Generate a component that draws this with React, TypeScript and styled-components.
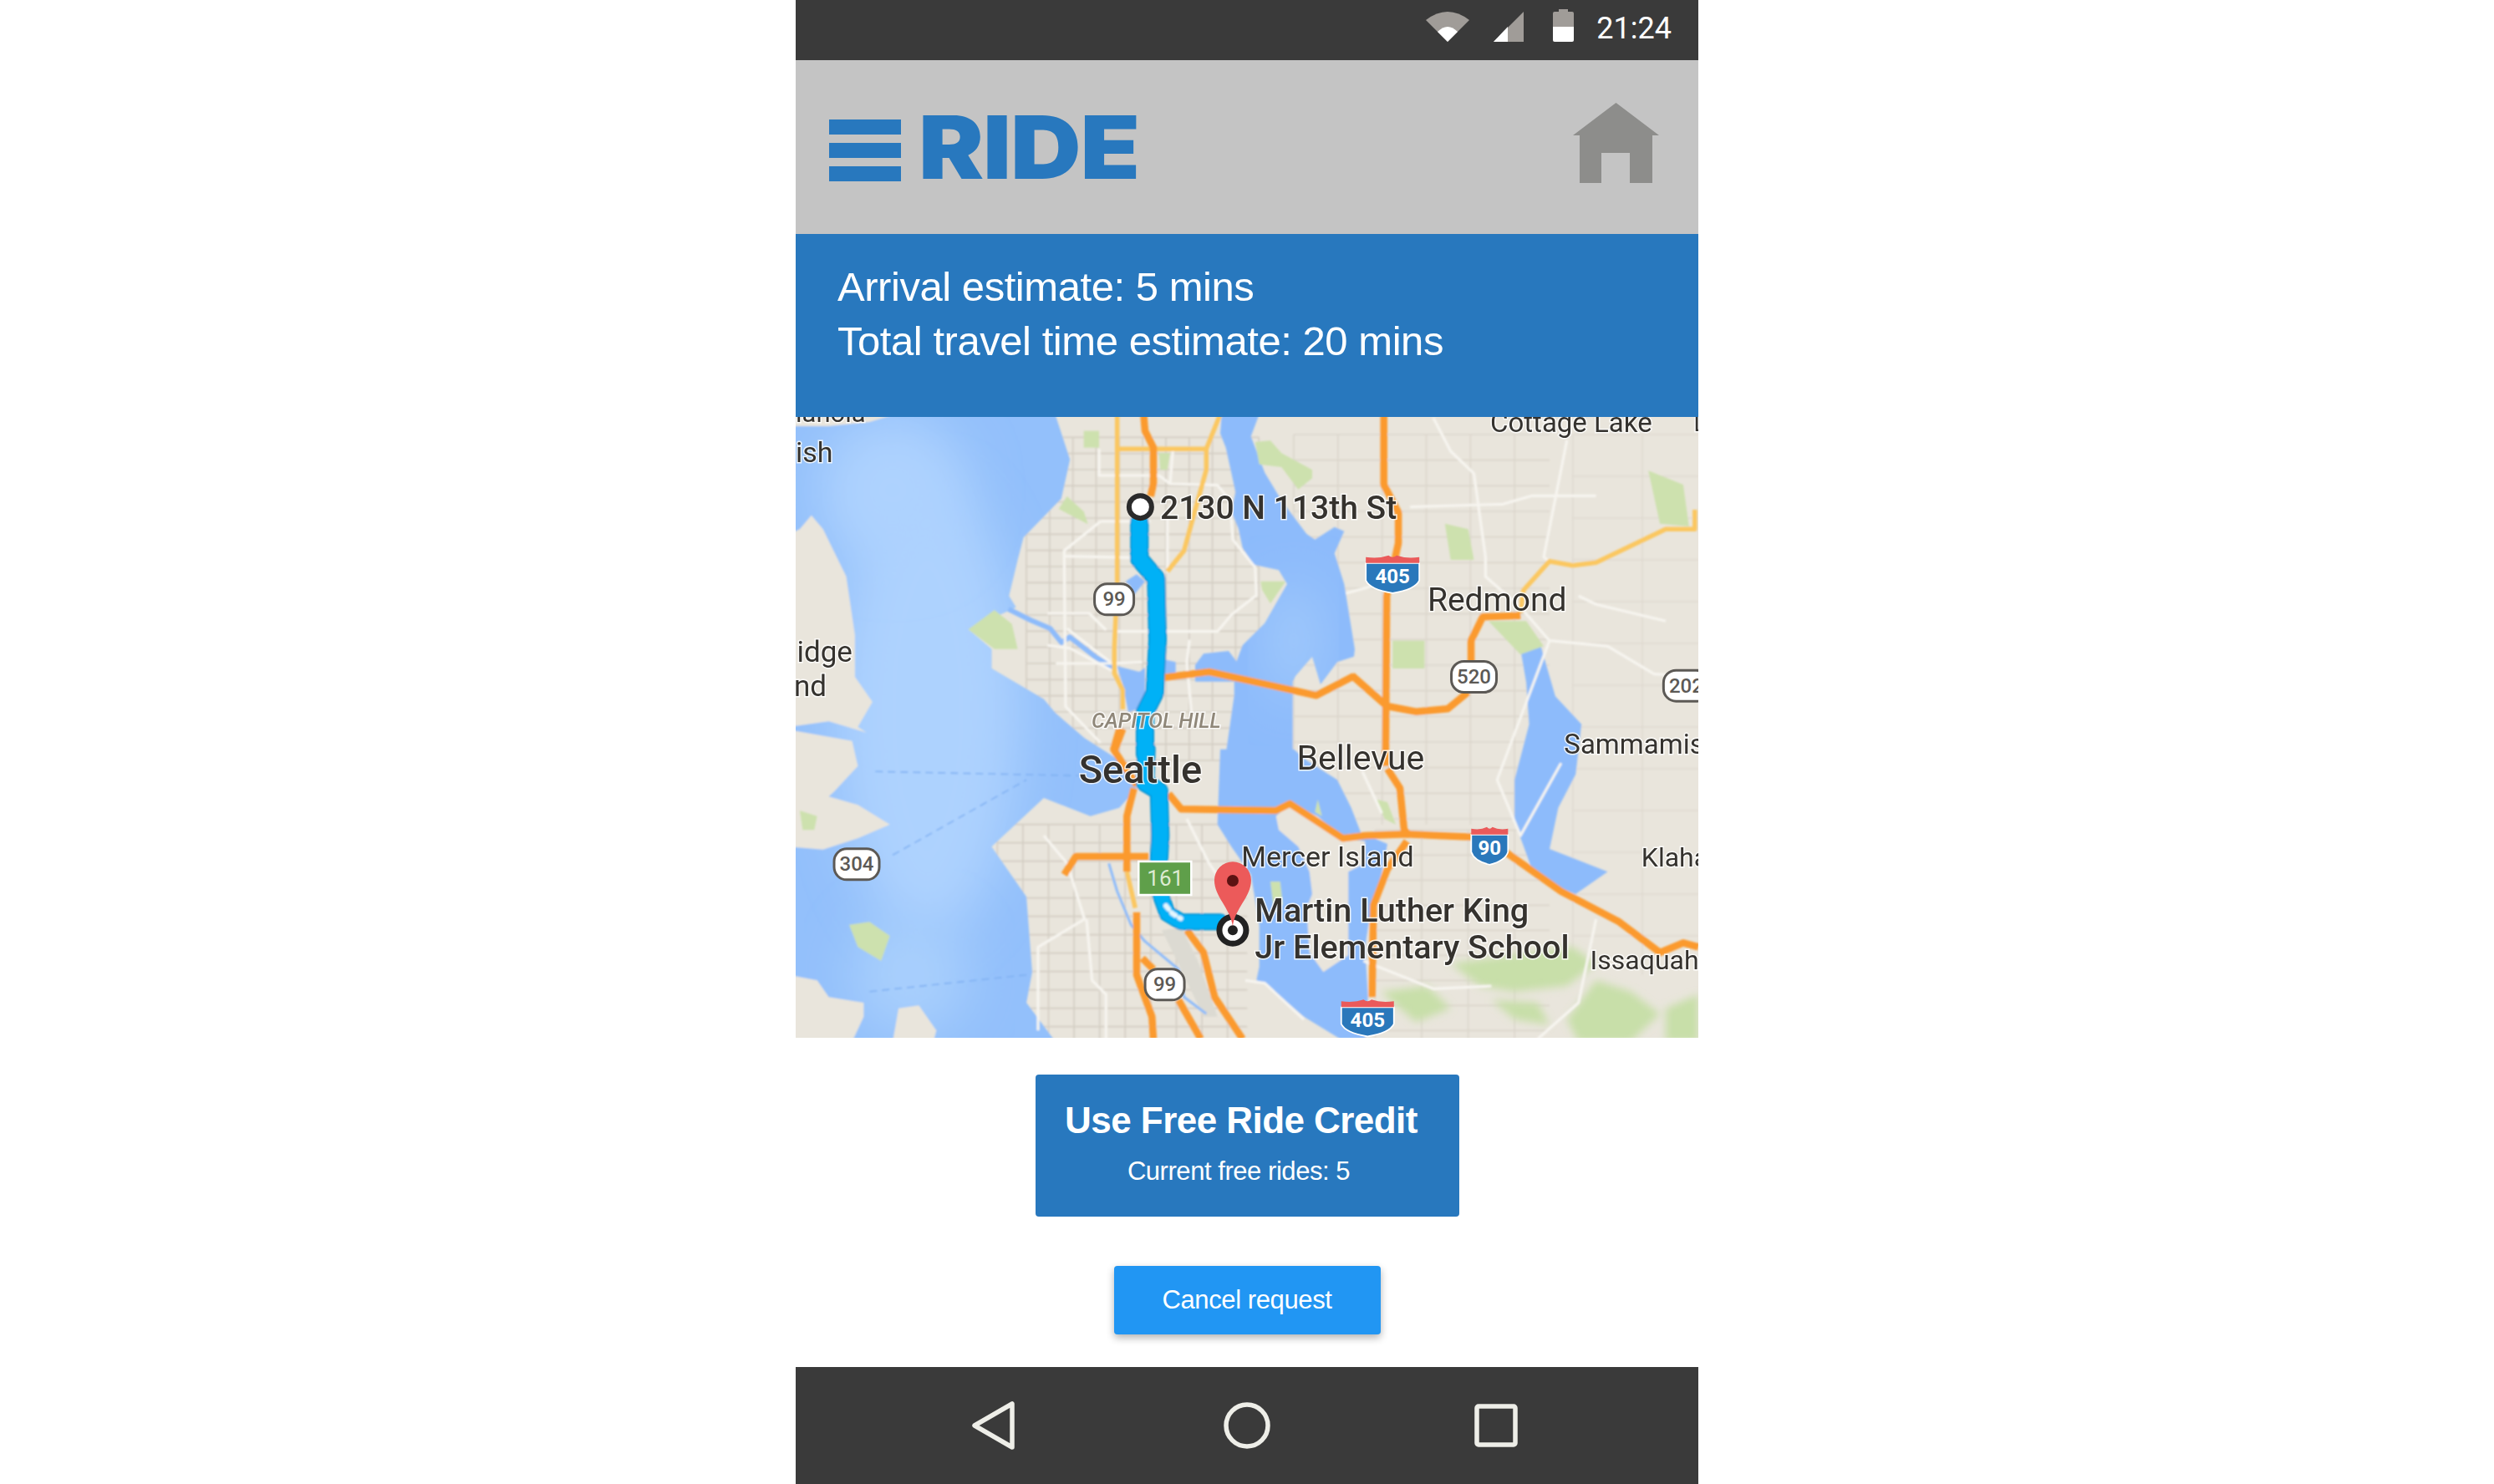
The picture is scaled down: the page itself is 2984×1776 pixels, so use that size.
import React from 'react';
import styled, { createGlobalStyle } from 'styled-components';

const GlobalStyle = createGlobalStyle`
  html, body {
    margin: 0;
    padding: 0;
    background: #ffffff;
  }
`;

const BLUE = '#2878be';
const ORANGE = '#fb9a2e';
const YELLOW = '#fbc760';
const LAND = '#e9e5dc';
const SOUND = '#93c0fb';
const LAKE = '#8dbbfb';
const GREEN = '#cde1ae';

// map points were read off the reference, so convert them to map pixels here
const X = (u: number) => (u - 3) * 0.6954;
const Y = (v: number) => (v + 3) / 3;
const pts = (s: string) =>
  s
    .trim()
    .split(/\s+/)
    .map((p) => {
      const [u, v] = p.split(',').map(Number);
      return `${X(u).toFixed(1)},${Y(v).toFixed(1)}`;
    })
    .join(' ');

// same thing for points read from a 3x crop at page position ox, oy
const at = (ox: number, oy: number) => (s: string) =>
  s
    .trim()
    .split(/\s+/)
    .map((p) => {
      const [a, b] = p.split(',').map(Number);
      return `${(a / 3 + ox - 952).toFixed(1)},${(b / 3 + oy - 499).toFixed(1)}`;
    })
    .join(' ');
const north = at(1200, 499);
const south = at(1300, 900);

const sound = pts(
  '-10,-10 450,-10 475,150 460,290 395,430 385,510 370,640 382,680 300,760 340,830 340,900 430,1010 450,1060 500,1150 560,1230 590,1330 560,1400 510,1430 430,1365 340,1540 400,1720 410,1990 400,2100 450,2240 -10,2240',
);

const mainLake = north(
  '785,-10 920,-10 890,70 940,200 1000,300 1090,420 1120,440 1190,395 1225,410 1190,490 1225,600 1263,834 1260,860 1200,880 1140,960 1110,860 1050,930 1040,950 1040,1210 800,1210 830,1000 830,900 860,820 940,740 1020,600 990,550 900,530 860,470 845,400 820,340 835,270 800,110 780,60',
);

const lakes = [
  mainLake,
  north('690,890 720,850 810,840 840,880 830,950 690,950'),
  north('575,870 620,880 620,930 575,930'),
  north('410,895 490,915 510,900 510,990 480,1050 450,1060 430,960'),
  north('440,590 480,565 510,590 470,640 440,640 460,610'),
  south('480,-10 470,260 520,340 590,440 620,620 620,770 610,820 640,830 780,950 910,1030 1000,1030 1010,880 1000,700 1015,600 1060,430 1080,330 985,290 950,200 900,100 790,30 744,-10'),
  pts('1250,830 1285,820 1310,1000 1355,1100 1345,1280 1315,1400 1300,1550 1290,1540 1400,1630 1345,1710 1275,1650 1240,1450 1240,1300 1265,1100 1260,950'),
];

const lands = [
  pts('-10,-10 170,-10 130,15 60,30 -10,30'),
  pts('-10,420 10,400 30,350 50,400 90,570 105,780 105,930 135,1020 110,1110 125,1130 60,1090 -10,1110'),
  pts('-10,1120 100,1160 110,1250 70,1340 60,1360 110,1390 165,1460 110,1510 50,1550 -10,1540'),
  pts('-10,2000 40,2020 60,2080 120,2100 120,2150 100,2240 -10,2240'),
  pts('180,2120 215,2110 245,2200 240,2240 170,2240'),
  south('680,230 730,185 830,230 920,310 1000,320 1000,400 940,430 940,730 850,790 800,720 790,560 810,510 800,430 760,340 690,280'),
];

const greens = [
  pts('95,1820 130,1810 165,1860 150,1950 110,1900'),
  pts('300,760 345,690 375,740 385,830 345,830'),
  north('925,590 1015,590 960,670 930,620'),
  north('200,330 230,285 290,340 305,385'),
  north('290,50 345,50 345,110 290,110'),
  north('560,130 600,130 590,190 565,190'),
  north('905,90 960,85 1000,130 1110,190 1110,220 1060,260 1000,180 920,170'),
  pts('1030,800 1085,800 1085,900 1030,900'),
  pts('1195,730 1260,730 1290,820 1250,850'),
  pts('1470,190 1530,240 1540,390 1490,380'),
  pts('1120,380 1160,400 1170,510 1130,510'),
  pts('10,1410 40,1430 35,1480 15,1480'),
  south('660,465 695,465 705,550 670,550'),
  south('830,170 845,230 820,215'),
  south('1040,170 1080,180 1110,260 1070,240'),
];

// the hills south east of the lakes are a mottled green, not one flat patch
const hills = [
  pts('1130,1960 1230,1930 1340,1900 1380,1960 1330,2040 1240,2060 1180,2040'),
  pts('1380,2020 1440,2060 1490,2140 1440,2240 1350,2240 1330,2160'),
  pts('1500,2120 1556,2070 1556,2240 1500,2240'),
  pts('1200,2090 1280,2100 1300,2180 1240,2160'),
  pts('1010,2060 1090,2040 1130,2120 1070,2170'),
];

const whites = [
  north('345,115 345,210 560,210 600,240 770,245 815,300 825,440 905,540 910,640 820,710 770,770 400,770'),
  north('350,375 220,480 225,1040 350,1170'),
  north('160,705 310,705 370,765'),
  north('160,820 240,830 390,910'),
  north('190,885 390,885 500,880'),
  north('225,500 470,505'),
  north('610,120 600,240'),
  north('590,360 590,560'),
  north('350,375 530,375'),
  north('670,800 660,880 680,1100'),
  north('230,760 385,880'),
  south('360,240 440,400 530,530'),
  south('570,820 640,830 780,960'),
  south('990,70 1060,220'),
  south('0,600 20,820 70,870 70,1030'),
  pts('1330,80 1290,500 1300,515'),
  pts('1100,0 1130,120 1170,200 1190,500 1190,570 1250,680 1300,800 1400,820 1480,920 1556,930'),
  pts('1060,320 1220,310 1270,280 1380,280'),
  pts('1350,640 1380,670 1500,730'),
  pts('950,630 1020,590'),
  pts('1300,800 1210,1300 1250,1500 1320,1240'),
  pts('430,1500 470,1600 500,1800 420,1900 420,2200'),
  pts('980,1950 1100,2050 1200,2040'),
  pts('1380,1800 1350,2100 1280,2230'),
];

const yellows = [
  north('410,-10 410,600 400,830 400,920 430,980 430,1050'),
  north('410,115 730,115'),
  north('780,-10 730,115 730,190 680,370 650,480 590,555'),
  south('145,430 175,560'),
  pts('1550,330 1550,400 1500,400 1380,520 1340,530 1300,515 1255,620 1250,700'),
];

const oranges = [
  north('505,-10 510,50 540,110 540,240 530,285'),
  north('580,935 740,915 1125,1000 1260,930'),
  pts('960,925 1020,1035 1070,1055 1125,1045 1160,985'),
  pts('1165,880 1165,800 1185,715 1250,710'),
  pts('1015,-10 1015,240 1040,340 1040,450 1020,640 1018,1250'),
  south('1080,60 1125,130 1140,280 1160,300'),
  north('430,1120 400,1200'),
  pts('560,1120 550,1190 590,1320'),
  south('295,150 340,205 680,210 730,185 920,310 1000,300 1150,295 1260,300 1390,305'),
  pts('1225,1560 1320,1700 1420,1810 1490,1920 1530,1885 1556,1900'),
  south('170,130 145,230 145,430'),
  south('180,575 180,800 235,950 240,1030'),
  south('200,740 240,780'),
  south('330,890 410,1030'),
  south('360,640 420,720 460,880 560,1030'),
  pts('465,1640 485,1575 610,1575'),
  south('1150,320 1080,420 1030,550 1025,880'),
];

const routeNorth = north('490,380 490,510 550,580 555,800 545,990 510,1060 510,1210');
const routeMiddle = south('215,-10 210,110 260,140 265,300 260,390');
const routeSouth = south('265,510 290,580 340,610 480,610');

const grids = [
  { u0: 400, v0: 70, u1: 800, v1: 1230, du: 40, dv: 58, shade: '#d3cdc3' },
  { u0: 860, v0: 60, u1: 1300, v1: 1460, du: 76, dv: 92, shade: '#dbd6cc' },
  { u0: 350, v0: 1460, u1: 780, v1: 2240, du: 44, dv: 66, shade: '#d3cdc3' },
  { u0: 1000, v0: 1480, u1: 1300, v1: 2240, du: 80, dv: 90, shade: '#dbd6cc' },
  { u0: 1340, v0: 60, u1: 1556, v1: 2000, du: 120, dv: 150, shade: '#dfdad1' },
  { u0: 830, v0: 1500, u1: 950, v1: 1900, du: 50, dv: 80, shade: '#dbd6cc' },
];

const labels = [
  { text: 'ianola', u: 3, v: 16, size: 31, weight: 400 },
  { text: 'ish', u: 3, v: 160, size: 34, weight: 400 },
  { text: 'Cottage Lake', u: 1198, v: 52, size: 33, weight: 400 },
  { text: 'L', u: 1548, v: 48, size: 28, weight: 400 },
  { text: 'Redmond', u: 1090, v: 692, size: 39, weight: 400 },
  { text: 'Bellevue', u: 865, v: 1262, size: 41, weight: 400 },
  { text: 'Seattle', u: 490, v: 1310, size: 47, weight: 500 },
  { text: 'idge', u: 5, v: 875, size: 35, weight: 400 },
  { text: 'nd', u: 0, v: 998, size: 35, weight: 400 },
  { text: 'Sammamish', u: 1325, v: 1205, size: 33, weight: 400 },
  { text: 'Mercer Island', u: 770, v: 1610, size: 34, weight: 400 },
  { text: 'Klahanie', u: 1458, v: 1610, size: 32, weight: 400 },
  { text: 'Issaquah', u: 1370, v: 1980, size: 32, weight: 400 },
  { text: '2130 N 113th St', u: 630, v: 362, size: 39, weight: 500 },
  { text: 'Martin Luther King', u: 793, v: 1810, size: 39.5, weight: 500 },
  { text: 'Jr Elementary School', u: 793, v: 1942, size: 39.5, weight: 500 },
];

const stateShields = [
  { text: '99', u: 551, v: 652, w: 47 },
  { text: '520', u: 1170, v: 930, w: 54 },
  { text: '202', u: 1535, v: 962, w: 54 },
  { text: '304', u: 108, v: 1603, w: 54 },
  { text: '99', u: 638, v: 2035, w: 47 },
];

const interstates = [
  { text: '405', u: 1030, v: 562, w: 64, h: 45 },
  { text: '90', u: 1197, v: 1537, w: 44, h: 45 },
  { text: '405', u: 987, v: 2155, w: 63, h: 44 },
];

const Interstate = ({ text, x, y, w, h }: { text: string; x: number; y: number; w: number; h: number }) => {
  const s = w / 2;
  const top = -h / 2;
  const band = top + 9;
  const bottom = h / 2;
  return (
    <g transform={`translate(${x} ${y})`}>
      <path
        d={`M${-s} ${band} L${s} ${band} L${s} ${bottom - h * 0.34} Q${s * 0.85} ${bottom - h * 0.1} 0 ${bottom} Q${-s * 0.85} ${bottom - h * 0.1} ${-s} ${bottom - h * 0.34} Z`}
        fill="#2a78bb"
        stroke="#ffffff"
        strokeWidth="1.8"
      />
      <path
        d={`M${-s} ${band} L${-s} ${top + 2} Q${-s * 0.5} ${top + 4} ${-s * 0.15} ${top} Q0 ${top + 4} ${s * 0.15} ${top} Q${s * 0.5} ${top + 4} ${s} ${top + 2} L${s} ${band} Z`}
        fill="#ea5a5a"
      />
      <text x="0" y={band + 24} textAnchor="middle" fontFamily="Roboto, sans-serif" fontWeight="700" fontSize="24" fill="#ffffff">
        {text}
      </text>
    </g>
  );
};

const MapDrawing = () => (
  <MapSvg viewBox="0 0 1080 743" preserveAspectRatio="none">
    <defs>
      <filter id="soft" x="-2%" y="-2%" width="104%" height="104%">
        <feGaussianBlur stdDeviation="0.9" />
      </filter>
      <filter id="softer" x="-40%" y="-40%" width="180%" height="180%">
        <feGaussianBlur stdDeviation="30" />
      </filter>
      <filter id="textSoft">
        <feGaussianBlur stdDeviation="0.45" />
      </filter>
      <filter id="hillSoft" x="-10%" y="-10%" width="120%" height="120%">
        <feGaussianBlur stdDeviation="5" />
      </filter>
      <clipPath id="soundClip">
        <polygon points={sound} />
      </clipPath>
      <clipPath id="lakeClip">
        <polygon points={mainLake} />
      </clipPath>
    </defs>
    <rect x="0" y="0" width="1080" height="743" fill={LAND} />
    <g filter="url(#soft)">
      <g strokeWidth="1.6">
        {grids.map((g, i) => {
          const lines = [];
          for (let u = g.u0; u <= g.u1; u += g.du) {
            lines.push(<line key={`u${u}`} x1={X(u)} y1={Y(g.v0)} x2={X(u)} y2={Y(g.v1)} />);
          }
          for (let v = g.v0; v <= g.v1; v += g.dv) {
            lines.push(<line key={`v${v}`} x1={X(g.u0)} y1={Y(v)} x2={X(g.u1)} y2={Y(v)} />);
          }
          return (
            <g key={i} stroke={g.shade}>
              {lines}
            </g>
          );
        })}
      </g>
      <polygon points={sound} fill={SOUND} />
      <g clipPath="url(#soundClip)">
        <ellipse cx={X(230)} cy={Y(1050)} rx="110" ry="270" fill="#add2fe" filter="url(#softer)" />
        <ellipse cx={X(170)} cy={Y(260)} rx="90" ry="90" fill="#add2fe" filter="url(#softer)" />
        <ellipse cx={X(200)} cy={Y(2000)} rx="70" ry="70" fill="#a8cffd" filter="url(#softer)" />
      </g>
      {lakes.map((p, i) => (
        <polygon key={i} points={p} fill={LAKE} />
      ))}
      <g clipPath="url(#lakeClip)">
        <ellipse cx={X(860)} cy={Y(800)} rx="30" ry="70" fill="#a2cafc" filter="url(#softer)" />
      </g>
      {lands.map((p, i) => (
        <polygon key={i} points={p} fill={LAND} />
      ))}
      <polygon points={south('270,640 340,630 400,750 470,950 420,950 320,740')} fill="#dcdad2" />
      <g filter="url(#hillSoft)">
        {hills.map((p, i) => (
          <polygon key={i} points={p} fill="#c8dfa9" />
        ))}
      </g>
      {greens.map((p, i) => (
        <polygon key={i} points={p} fill={GREEN} />
      ))}
      <g fill="none" stroke={LAKE} strokeLinejoin="round">
        <polyline points={north('20,690 100,730 170,760 210,810 240,790 330,860 395,900')} strokeWidth="6" />
        <polyline points={south('80,400 110,500 160,620 210,680 330,780 350,880 430,940')} strokeWidth="3" />
      </g>
      <g fill="none" stroke="#7fb0f2" strokeWidth="1.6" strokeDasharray="9 6">
        <polyline points={pts('140,1270 490,1285')} />
        <polyline points={pts('170,1570 400,1300')} />
        <polyline points={pts('130,2060 400,2000')} />
      </g>
      <g fill="none" stroke="#f7f5f0" strokeWidth="3.2" strokeLinejoin="round">
        {whites.map((p, i) => (
          <polyline key={i} points={p} />
        ))}
      </g>
      <g fill="none" stroke={YELLOW} strokeWidth="5.5" strokeLinejoin="round">
        {yellows.map((p, i) => (
          <polyline key={i} points={p} />
        ))}
      </g>
      <g fill="none" stroke={ORANGE} strokeWidth="8.5" strokeLinejoin="round">
        {oranges.map((p, i) => (
          <polyline key={i} points={p} />
        ))}
      </g>
      <g fill="none" strokeLinejoin="round" strokeLinecap="round">
        <polyline points={routeNorth} stroke="#078ccf" strokeWidth="22" />
        <polyline points={routeMiddle} stroke="#078ccf" strokeWidth="22" />
        <polyline points={routeNorth} stroke="#01b1f6" strokeWidth="19" />
        <polyline points={routeMiddle} stroke="#01b1f6" strokeWidth="19" />
        <polyline points={routeSouth} stroke="#078ccf" strokeWidth="20" />
        <polyline points={routeSouth} stroke="#01b1f6" strokeWidth="17" />
        <polyline points={south('285,552 308,580 338,598')} stroke="#e4f6fd" strokeWidth="6" strokeDasharray="5 6" />
      </g>
    </g>
    {stateShields.map((s) => (
      <g key={s.text + s.u} transform={`translate(${X(s.u)} ${Y(s.v)})`}>
        <rect x={-s.w / 2} y="-18.5" width={s.w} height="37" rx="15" fill="#ffffff" stroke="#5c5955" strokeWidth="3" />
        <text y="8" textAnchor="middle" fontFamily="Roboto, sans-serif" fontWeight="500" fontSize="24" fill="#5c5955">
          {s.text}
        </text>
      </g>
    ))}
    {interstates.map((s) => (
      <Interstate key={s.text + s.u} text={s.text} x={X(s.u)} y={Y(s.v)} w={s.w} h={s.h} />
    ))}
    <g transform={`translate(${X(593)} ${Y(1593)})`}>
      <rect x="0" y="0" width="63" height="40" fill="#5f9f4a" stroke="#ffffff" strokeWidth="2.5" />
      <text x="32" y="29" textAnchor="middle" fontFamily="Roboto, sans-serif" fontSize="26" fill="#dcebd2">
        161
      </text>
    </g>
    <g filter="url(#textSoft)">
      <MapLabel x={X(512)} y={Y(1112)} fontSize="25" fontStyle="italic" fontWeight="500" $tint="#8f8779">
        CAPITOL HILL
      </MapLabel>
      {labels.map((l) => (
        <MapLabel key={l.text} x={X(l.u)} y={Y(l.v)} fontSize={l.size} fontWeight={l.weight} $tint="#35332f">
          {l.text}
        </MapLabel>
      ))}
    </g>
    <circle cx={X(596)} cy={Y(320)} r="13.5" fill="#ffffff" stroke="#2a2a2a" strokeWidth="6" />
    <circle cx={X(755)} cy={Y(1840)} r="16" fill="#ffffff" stroke="#222222" strokeWidth="7" />
    <circle cx={X(755)} cy={Y(1840)} r="6" fill="#222222" />
    <path
      d={`M${X(755)} ${Y(1825)} C${X(755) - 3} ${Y(1760)} ${X(755) - 22} ${Y(1720)} ${X(755) - 22} ${Y(1660)} A22 22 0 1 1 ${X(755) + 22} ${Y(1660)} C${X(755) + 22} ${Y(1720)} ${X(755) + 3} ${Y(1760)} ${X(755)} ${Y(1825)} Z`}
      fill="#ec5a5a"
    />
    <circle cx={X(755)} cy={Y(1662)} r="7" fill="#5c1212" />
  </MapSvg>
);

export default function App() {
  return (
    <>
      <GlobalStyle />
      <Page>
        <Phone>
          <StatusBar>
            <svg width="52" height="36" viewBox="0 0 52 36">
              <path d="M0 10 Q26 -10 52 10 L26 36 Z" fill="#a09c98" />
              <path d="M14 24 Q26 12 38 24 L26 36 Z" fill="#ffffff" />
            </svg>
            <svg width="36" height="36" viewBox="0 0 36 36">
              <path d="M36 0 L36 36 L0 36 Z" fill="#a09c98" />
              <path d="M0 36 L17 18 L17 36 Z" fill="#ffffff" />
            </svg>
            <BatteryIcon width="25" height="39" viewBox="0 0 25 39">
              <path d="M7 0 H18 V3 H23 Q25 3 25 5 V21 H0 V5 Q0 3 2 3 H7 Z" fill="#a09c98" />
              <path d="M0 21 H25 V37 Q25 39 23 39 H2 Q0 39 0 37 Z" fill="#ffffff" />
            </BatteryIcon>
            <Clock>21:24</Clock>
          </StatusBar>
          <Header>
            <Logo>
              <Burger>
                <BurgerBar />
                <BurgerBar />
                <BurgerBar />
              </Burger>
              <Wordmark>RIDE</Wordmark>
            </Logo>
            <HomeIcon width="103" height="96" viewBox="0 0 103 96">
              <path d="M51.5 0 L103 39 L95 39 L95 96 L68 96 L68 60 L34 60 L34 96 L8 96 L8 39 L0 39 Z" fill="#8d8d8b" />
            </HomeIcon>
          </Header>
          <Estimates>
            <EstimateLine>Arrival estimate: 5 mins</EstimateLine>
            <EstimateLine>Total travel time estimate: 20 mins</EstimateLine>
          </Estimates>
          <MapFrame>
            <MapDrawing />
          </MapFrame>
          <Actions>
            <CreditButton>
              <CreditTitle>Use Free Ride Credit</CreditTitle>
              <CreditNote>Current free rides: 5</CreditNote>
            </CreditButton>
            <CancelButton>Cancel request</CancelButton>
          </Actions>
          <NavBar>
            <svg width="52" height="60" viewBox="0 0 52 60">
              <path d="M49 4 L49 56 L4 30 Z" fill="none" stroke="#eeeee8" strokeWidth="5.5" strokeLinejoin="round" />
            </svg>
            <HomeCircle width="56" height="56" viewBox="0 0 56 56">
              <circle cx="28" cy="28" r="25" fill="none" stroke="#eeeee8" strokeWidth="5.5" />
            </HomeCircle>
            <svg width="52" height="52" viewBox="0 0 52 52">
              <rect x="3" y="3" width="46" height="46" rx="2" fill="none" stroke="#eeeee8" strokeWidth="5.5" />
            </svg>
          </NavBar>
        </Phone>
      </Page>
    </>
  );
}

const Page = styled.div`
  display: flex;
  justify-content: center;
  width: 100%;
  height: 1776px;
  background: #ffffff;
  overflow: hidden;
`;

const Phone = styled.div`
  display: flex;
  flex-direction: column;
  width: 1080px;
  height: 1776px;
  font-family: 'Liberation Sans', Arial, sans-serif;
`;

const StatusBar = styled.div`
  display: flex;
  align-items: flex-end;
  justify-content: flex-end;
  gap: 29px;
  height: 50px;
  padding: 0 32px 22px 0;
  background: #3a3a3a;
`;

const BatteryIcon = styled.svg`
  margin-left: 6px;
`;

const Clock = styled.div`
  position: relative;
  top: 2px;
  margin-left: -2px;
  font-family: Roboto, sans-serif;
  font-size: 36px;
  line-height: 35px;
  color: #ffffff;
`;

const Header = styled.div`
  display: flex;
  align-items: center;
  justify-content: space-between;
  height: 208px;
  padding: 0 47px 0 40px;
  background: #c4c4c4;
  box-sizing: border-box;
`;

const Logo = styled.div`
  display: flex;
  align-items: center;
  gap: 21px;
`;

const Burger = styled.div`
  display: flex;
  flex-direction: column;
  gap: 10px;
  width: 86px;
  margin-top: 8px;
`;

const BurgerBar = styled.div`
  height: 18px;
  background: ${BLUE};
`;

const Wordmark = styled.div`
  font-family: Inter, sans-serif;
  font-size: 104px;
  font-weight: 900;
  line-height: 104px;
  letter-spacing: -1px;
  color: ${BLUE};
  transform: scaleX(1.125);
  transform-origin: left center;
`;

const HomeIcon = styled.svg`
  margin-bottom: 10px;
`;

const Estimates = styled.div`
  display: flex;
  flex-direction: column;
  justify-content: center;
  height: 219px;
  padding: 0 0 28px 50px;
  box-sizing: border-box;
  background: ${BLUE};
`;

const EstimateLine = styled.div`
  font-size: 49px;
  line-height: 65px;
  letter-spacing: -0.45px;
  color: #ffffff;
`;

const MapFrame = styled.div`
  height: 743px;
  overflow: hidden;
`;

const MapSvg = styled.svg`
  display: block;
  width: 1080px;
  height: 743px;
`;

const MapLabel = styled.text<{ $tint: string }>`
  font-family: Roboto, sans-serif;
  fill: ${({ $tint }) => $tint};
  stroke: #ffffff;
  stroke-opacity: 0.8;
  stroke-width: 3px;
  paint-order: stroke;
`;

const Actions = styled.div`
  display: flex;
  flex-direction: column;
  align-items: center;
  gap: 59px;
  height: 394px;
  padding-top: 44px;
  box-sizing: border-box;
`;

const CreditButton = styled.div`
  display: flex;
  flex-direction: column;
  align-items: center;
  width: 507px;
  height: 170px;
  padding: 27px 14px 0 0;
  box-sizing: border-box;
  border-radius: 4px;
  background: ${BLUE};
  color: #ffffff;
`;

const CreditTitle = styled.div`
  font-size: 44px;
  font-weight: 700;
  line-height: 56px;
  letter-spacing: -0.55px;
`;

const CreditNote = styled.div`
  margin-top: 14px;
  padding-right: 6px;
  font-size: 31px;
  line-height: 38px;
  letter-spacing: -0.45px;
`;

const CancelButton = styled.div`
  display: flex;
  align-items: center;
  justify-content: center;
  width: 319px;
  height: 82px;
  border-radius: 4px;
  background: #2196f3;
  box-shadow: 0 4px 10px rgba(0, 0, 0, 0.3);
  font-size: 31px;
  letter-spacing: -0.4px;
  color: #ffffff;
`;

const NavBar = styled.div`
  display: flex;
  align-items: center;
  gap: 247px;
  height: 140px;
  padding-left: 210px;
  box-sizing: border-box;
  background: #3a3a3a;
`;

const HomeCircle = styled.svg`
  margin: 0 -3px 0 3px;
`;
